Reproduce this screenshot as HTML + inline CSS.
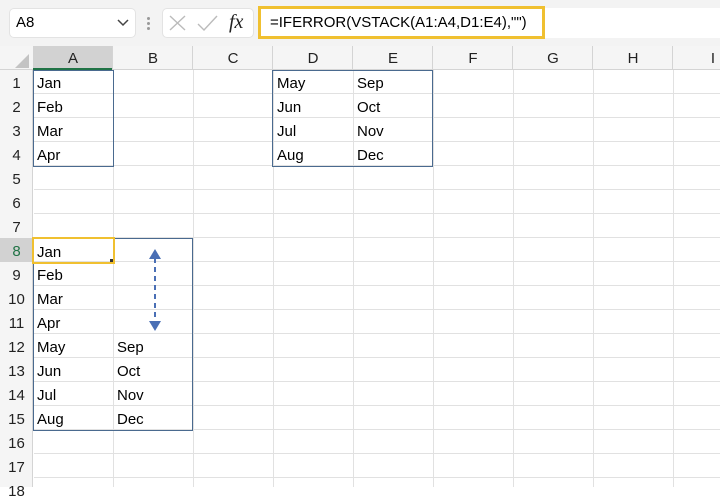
<!DOCTYPE html>
<html><head><style>
*{margin:0;padding:0;box-sizing:border-box}
body{width:720px;height:487px;overflow:hidden;background:#fff;font-family:"Liberation Sans",Calibri,sans-serif;position:relative}
.a{position:absolute}
.t{position:absolute;font-size:15px;color:#000;line-height:24px;margin-top:2px}
.ch{position:absolute;top:47px;height:24px;font-size:15px;color:#222;text-align:center;line-height:24px;width:80px}
.rh{position:absolute;left:0;width:33px;text-align:center;font-size:15px;color:#222;line-height:24px;height:24px;padding-top:2px}
</style></head><body>
<div class="a" style="left:0;top:0;width:720px;height:46px;background:#f3f3f3"></div>
<div class="a" style="left:9px;top:8px;width:127px;height:30px;background:#fff;border:1px solid #e3e3e3;border-radius:5px"></div>
<div class="t" style="left:16px;top:9px;font-size:15px">A8</div>
<svg class="a" style="left:117px;top:19px" width="12" height="8"><path d="M1 1 L6 6 L11 1" stroke="#444" stroke-width="1.5" fill="none"/></svg>
<div class="a" style="left:147px;top:17px;width:3px;height:3px;background:#999;border-radius:2px"></div>
<div class="a" style="left:147px;top:22px;width:3px;height:3px;background:#999;border-radius:2px"></div>
<div class="a" style="left:147px;top:27px;width:3px;height:3px;background:#999;border-radius:2px"></div>
<div class="a" style="left:162px;top:8px;width:92px;height:30px;background:#fff;border:1px solid #e3e3e3;border-radius:5px"></div>
<svg class="a" style="left:168px;top:14px" width="20" height="18"><path d="M2 2 L17 16 M17 2 L2 16" stroke="#bbb" stroke-width="1.4"/></svg>
<svg class="a" style="left:196px;top:14px" width="24" height="18"><path d="M2 10 L8 16 L21 2" stroke="#bbb" stroke-width="1.4" fill="none"/></svg>
<div class="t" style="left:229px;top:8px;font-family:'Liberation Serif',serif;font-style:italic;font-size:20px;color:#222">fx</div>
<div class="a" style="left:258px;top:8px;width:462px;height:30px;background:#fff"></div>
<div class="a" style="left:258px;top:6px;width:287px;height:33px;border:3px solid #f0c030"></div>
<div class="t" style="left:270px;top:9px">=IFERROR(VSTACK(A1:A4,D1:E4),"")</div>
<div class="a" style="left:0;top:46px;width:720px;height:24px;background:#f5f5f5;border-bottom:1px solid #d4d4d4"></div>
<div class="a" style="left:0;top:70px;width:33px;height:417px;background:#f5f5f5;border-right:1px solid #d4d4d4"></div>
<svg class="a" style="left:14px;top:53px" width="16" height="16"><path d="M15 1 L15 15 L1 15 Z" fill="#c3c3c3"/></svg>
<div class="a" style="left:33px;top:46px;width:80px;height:24px;background:#d2d2d2;border-bottom:2px solid #217346"></div>
<div class="a" style="left:0;top:238px;width:33px;height:24px;background:#d2d2d2"></div>
<div class="a" style="left:34px;top:70px;width:686px;height:417px;background-image:repeating-linear-gradient(to right,transparent 0,transparent 79px,#e1e1e1 79px,#e1e1e1 80px),repeating-linear-gradient(to bottom,transparent 0,transparent 23px,#e1e1e1 23px,#e1e1e1 24px)"></div>
<div class="a" style="left:33px;top:46px;width:687px;height:24px;background-image:repeating-linear-gradient(to right,transparent 0,transparent 79px,#d4d4d4 79px,#d4d4d4 80px)"></div>
<div class="ch" style="left:33px">A</div><div class="ch" style="left:113px">B</div><div class="ch" style="left:193px">C</div><div class="ch" style="left:273px">D</div><div class="ch" style="left:353px">E</div><div class="ch" style="left:433px">F</div><div class="ch" style="left:513px">G</div><div class="ch" style="left:593px">H</div><div class="ch" style="left:673px">I</div>
<div class="rh" style="top:70px">1</div><div class="rh" style="top:94px">2</div><div class="rh" style="top:118px">3</div><div class="rh" style="top:142px">4</div><div class="rh" style="top:166px">5</div><div class="rh" style="top:190px">6</div><div class="rh" style="top:214px">7</div><div class="rh" style="top:238px;color:#217346">8</div><div class="rh" style="top:262px">9</div><div class="rh" style="top:286px">10</div><div class="rh" style="top:310px">11</div><div class="rh" style="top:334px">12</div><div class="rh" style="top:358px">13</div><div class="rh" style="top:382px">14</div><div class="rh" style="top:406px">15</div><div class="rh" style="top:430px">16</div><div class="rh" style="top:454px">17</div><div class="rh" style="top:478px">18</div>
<div class="a" style="left:33px;top:70px;width:81px;height:97px;border:1.5px solid #4a6a8f"></div>
<div class="a" style="left:272px;top:70px;width:161px;height:97px;border:1.5px solid #4a6a8f"></div>
<div class="a" style="left:33px;top:238px;width:160px;height:193px;border:1px solid #4a6a8f"></div>
<div class="a" style="left:32px;top:237px;width:83px;height:27px;border:2.5px solid #f0c030"></div>
<div class="a" style="left:110px;top:259px;width:3px;height:3px;background:#333"></div>
<div class="t" style="left:37px;top:70px">Jan</div><div class="t" style="left:37px;top:94px">Feb</div><div class="t" style="left:37px;top:118px">Mar</div><div class="t" style="left:37px;top:142px">Apr</div>
<div class="t" style="left:277px;top:70px">May</div><div class="t" style="left:277px;top:94px">Jun</div><div class="t" style="left:277px;top:118px">Jul</div><div class="t" style="left:277px;top:142px">Aug</div>
<div class="t" style="left:357px;top:70px">Sep</div><div class="t" style="left:357px;top:94px">Oct</div><div class="t" style="left:357px;top:118px">Nov</div><div class="t" style="left:357px;top:142px">Dec</div>
<div class="t" style="left:37px;top:239px">Jan</div><div class="t" style="left:37px;top:262px">Feb</div><div class="t" style="left:37px;top:286px">Mar</div><div class="t" style="left:37px;top:310px">Apr</div><div class="t" style="left:37px;top:334px">May</div><div class="t" style="left:37px;top:358px">Jun</div><div class="t" style="left:37px;top:382px">Jul</div><div class="t" style="left:37px;top:406px">Aug</div>
<div class="t" style="left:117px;top:334px">Sep</div><div class="t" style="left:117px;top:358px">Oct</div><div class="t" style="left:117px;top:382px">Nov</div><div class="t" style="left:117px;top:406px">Dec</div>
<svg class="a" style="left:148px;top:248px" width="14" height="84"><path d="M7 10 L7 74" stroke="#4a6fb5" stroke-width="2" stroke-dasharray="5,4"/><path d="M1 11 L7 1 L13 11 Z M1 73 L7 83 L13 73 Z" fill="#4a6fb5"/></svg>
</body></html>
